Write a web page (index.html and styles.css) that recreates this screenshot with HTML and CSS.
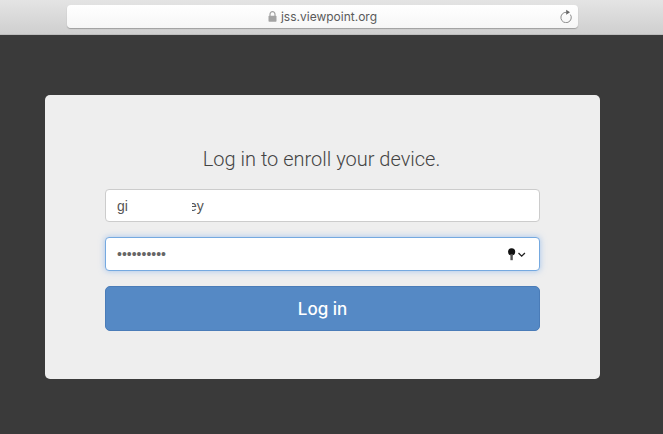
FILE: index.html
```html
<!DOCTYPE html>
<html lang="en">
<head>
<meta charset="utf-8">
<title>Log in</title>
<link rel="stylesheet" href="styles.css">
</head>
<body>
<header class="toolbar">
  <div class="address">
    <div class="address-center">
      <svg class="lock" width="9" height="11" viewBox="0 0 9 11"><path d="M2 5V3.2a2.5 2.5 0 0 1 5 0V5" fill="none" stroke="#a3a3a3" stroke-width="1.2"/><rect x="0.5" y="4.8" width="8" height="6" rx="0.8" fill="#a3a3a3"/></svg>
      <span class="url">jss.viewpoint.org</span>
    </div>
    <svg class="reload" width="12" height="14" viewBox="0 0 12 14"><path d="M6.4 3.3A5.2 5.2 0 1 0 10.4 5.6" fill="none" stroke="#808080" stroke-width="0.9"/><path d="M6.2 0.8l3.8 2.5-3.8 2.5z" fill="#666"/></svg>
  </div>
</header>
<main class="stage">
  <section class="card">
    <h1 class="title">Log in to enroll your device.</h1>
    <div class="field"><span>gil</span><span class="redact"></span><span>ey</span></div>
    <div class="field field-focus">
      <span class="dots">••••••••••</span>
      <svg class="keychain" width="20" height="14" viewBox="0 0 20 14"><circle cx="3.6" cy="4.8" r="3.6" fill="#111"/><rect x="2.4" y="7" width="2.4" height="6.2" fill="#555"/><path d="M10.5 6l3.2 3.2L16.9 6" fill="none" stroke="#222" stroke-width="1.3"/></svg>
    </div>
    <button class="submit" type="button">Log in</button>
  </section>
</main>
</body>
</html>
```
FILE: styles.css
```css
* { box-sizing: border-box; }
html, body { margin: 0; height: 100%; }
body {
  background: #3a3a3a;
  font-family: "Liberation Sans", Arial, sans-serif;
  overflow: hidden;
}
.toolbar {
  height: 35px;
  padding: 5px 85px 0 67px;
  background: linear-gradient(#e4e4e4, #cfcfcf);
  border-bottom: 1px solid #bdbdbd;
}
.address {
  position: relative;
  height: 23px;
  display: flex;
  align-items: center;
  justify-content: center;
  background: linear-gradient(#ffffff, #f6f6f6);
  border-radius: 4px;
  box-shadow: 0 1px 1px rgba(0, 0, 0, 0.25);
}
.address-center { display: flex; align-items: center; gap: 4px; }
.lock { display: block; margin-top: -1px; }
.url { font-family: "Inter", "Liberation Sans", sans-serif; font-size: 12px; color: #5a5a5a; }
.reload { position: absolute; right: 6px; top: 4px; }
.stage { padding: 60px 63px 0 45px; }
.card {
  height: 284px;
  padding: 51px 60px 0;
  background: #eeeeee;
  border-radius: 5px;
  display: flex;
  flex-direction: column;
}
.title {
  margin: 0 2px 17px 0;
  height: 26px;
  font-family: Roboto, "Liberation Sans", sans-serif;
  font-weight: 300;
  font-size: 20px;
  line-height: 26px;
  color: #444;
  text-align: center;
}
.field {
  height: 33px;
  margin-bottom: 15px;
  padding: 0 11px;
  display: flex;
  align-items: center;
  background: #fff;
  border: 1px solid #cccccc;
  border-radius: 4px;
  font-size: 14px;
  color: #555;
}
.redact {
  position: relative;
  width: 64px;
  height: 20px;
  margin: 0 -3px 0 -3px;
  background: #fff;
}
.field-focus {
  height: 34px;
  justify-content: space-between;
  border-color: #75a9e0;
  box-shadow: 0 0 6px rgba(102, 160, 233, 0.55);
}
.dots { font-size: 14px; color: #666; }
.keychain { display: block; }
.submit {
  height: 45px;
  padding: 0;
  background: #5589c5;
  border: 1px solid #4a7cb8;
  border-radius: 5px;
  color: #fff;
  font-family: Inter, "Liberation Sans", sans-serif;
  font-weight: 500;
  font-size: 17px;
}
```
